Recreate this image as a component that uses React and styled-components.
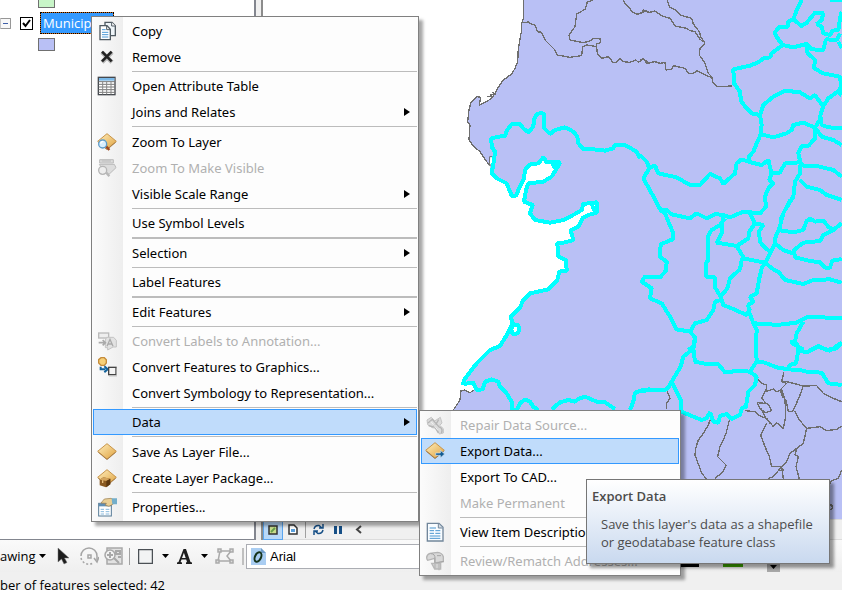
import React from "react";
import styled, { createGlobalStyle } from "styled-components";

const GlobalStyle = createGlobalStyle`
  * { box-sizing: border-box; }
  body {
    margin: 0;
    overflow: hidden;
    background: #f0f0f0;
    color: #000;
    font-family: "Open Sans", "Noto Sans", sans-serif;
    font-size: 13px;
  }
  button, select, input { font: inherit; color: inherit; margin: 0; }
`;

const Window = styled.div`
  position: relative;
  display: flex;
  flex-direction: column;
  height: 100vh;
`;

const Workspace = styled.div`
  display: flex;
  flex: 1;
  gap: 5px;
  min-height: 0;
`;

/* ---------- table of contents ---------- */

const Contents = styled.aside`
  flex: 0 0 256px;
  display: flex;
  flex-direction: column;
  gap: 4px;
  background: #fff;
  border-right: 2px solid #83868f;
  border-bottom: 1px solid #83868f;
`;

const Swatch = styled.span`
  flex: none;
  width: 17px;
  height: ${(p) => (p.$cut ? 8 : 13)}px;
  margin-left: 38px;
  background: ${(p) => p.$fill};
  border: 1px solid #707070;
  ${(p) => p.$cut && "border-top: 0;"}
`;

const LayerRow = styled.div`
  display: flex;
  align-items: center;
  height: 22px;
`;

const Expander = styled.button`
  width: 11px;
  height: 11px;
  margin-right: 9px;
  padding: 0 2px;
  border: 1px solid #979797;
  border-left-color: #c8c8c8;
  border-radius: 1px;
  background: #f8f8f8;
  display: flex;
  align-items: center;
`;

const Minus = styled.span`
  width: 100%;
  height: 1px;
  background: #3f5fa8;
`;

const CheckBox = styled.label`
  display: grid;
  width: 13px;
  height: 13px;
  margin-right: 7px;

  input {
    grid-area: 1 / 1;
    appearance: none;
    width: 13px;
    height: 13px;
    border: 1px solid #000;
    background: #fff;
  }
  svg { grid-area: 1 / 1; pointer-events: none; }
`;

const LayerName = styled.button`
  width: 74px;
  height: 22px;
  padding: 0 2px;
  overflow: hidden;
  text-align: left;
  line-height: 20px;
  color: #fff;
  background:
    linear-gradient(#3399ff, #3399ff) padding-box,
    linear-gradient(#c8681a, #c8681a) border-box;
  border: 1px dotted #000;
`;

/* ---------- map ---------- */

const MapPane = styled.main`
  flex: 1;
  display: flex;
  flex-direction: column;
  min-width: 0;
  border-left: 2px solid #8c8c8c;
`;

const MapCanvas = styled.div`
  flex: 1;
  min-height: 0;
  background: #fff;

  svg { display: block; width: 100%; height: 100%; }
`;

const ViewBar = styled.div`
  display: flex;
  align-items: center;
  height: 21px;
  border-top: 1px solid #dcdcdc;
  border-bottom: 1px solid #dcdcdc;
  background: #f0f0f0;
`;

const ViewButton = styled.button`
  display: grid;
  place-items: center;
  width: 20px;
  height: 20px;
  padding: 0;
  border: 1px solid ${(p) => (p.$active ? "#5ba5ee" : "transparent")};
  background: ${(p) => (p.$active ? "#b8d8f8" : "transparent")};
`;

const Divider = styled.span`
  flex: none;
  width: ${(p) => (p.$wide ? 2 : 1)}px;
  height: 17px;
  margin: 0 2px;
  background: ${(p) => (p.$wide ? "#c0c0c0" : "#a0a0a0")};
`;

/* ---------- bottom bars ---------- */

const Toolbar = styled.div`
  display: flex;
  align-items: center;
  height: 32px;
  background: linear-gradient(#fafafa, #efefef);
`;

const DrawingMenu = styled.button`
  display: flex;
  flex: none;
  align-items: center;
  gap: 3px;
  width: 48px;
  padding: 0;
  border: 0;
  background: none;
`;

const Tool = styled.button`
  flex: none;
  display: grid;
  place-items: center;
  width: ${(p) => p.$w || 27}px;
  height: 24px;
  padding: 0;
  border: 0;
  background: none;
`;

const FontBox = styled.label`
  display: flex;
  flex: 1 1 auto;
  align-items: center;
  gap: 4px;
  height: 25px;
  padding-left: 4px;
  background: #fff;
  border: 1px solid #abadb3;

  select {
    flex: 1;
    appearance: none;
    padding: 0;
    border: 0;
    background: none;
    font-family: "Liberation Sans", Arial, sans-serif;
    font-size: 13px;
  }
`;

const ColorTools = styled.div`
  flex: none;
  display: flex;
  align-items: flex-end;
  justify-content: flex-end;
  gap: 24px;
  width: 176px;
  height: 32px;
  padding-right: 62px;
`;

const ColorBar = styled.button`
  width: 20px;
  height: 3px;
  margin-bottom: 5px;
  padding: 0;
  border: 0;
  background: ${(p) => p.$color};
`;

const Overflow = styled.button`
  display: grid;
  place-items: center;
  width: 13px;
  height: 14px;
  padding: 4px 0 0;
  border: 0;
  background: #a8a8a8;
`;

const StatusBar = styled.footer`
  height: 18px;
  line-height: 26px;
  white-space: nowrap;
  background: #f0f0f0;
`;

/* ---------- menus ---------- */

const MenuPanel = styled.div`
  position: absolute;
  left: ${(p) => p.$left}px;
  top: ${(p) => p.$top}px;
  width: ${(p) => p.$width}px;
  padding: 1px;
  border: 1px solid #808080;
  background: linear-gradient(90deg, #fbfbfb 1px, #eeeeee 31px, #fdfdfd 31px);
  box-shadow: 4px 4px 3px rgba(0, 0, 0, 0.35);
  font-family: "Noto Sans", "Open Sans", sans-serif;
`;

const Item = styled.button`
  display: grid;
  grid-template-columns: 26px 1fr 12px;
  column-gap: 12px;
  align-items: center;
  width: 100%;
  height: 26px;
  padding: 0;
  border: 1px solid ${(p) => (p.$active ? "#3399ff" : "transparent")};
  background: ${(p) => (p.$active ? "#c0dcfb" : "none")};
  color: ${(p) => (p.disabled ? "#b0b0b0" : "#000")};
  text-align: left;
  line-height: 18px;
  white-space: nowrap;
`;

const IconCell = styled.span`
  display: grid;
  place-items: center;

  svg { width: 20px; height: 20px; }
`;

const Rule = styled.div`
  height: ${(p) => (p.$kind === "thin" ? 3 : 4)}px;
  margin-left: 39px;
  border: solid #fdfdfd;
  border-width: 1px 0 ${(p) => (p.$kind === "tall" ? 2 : 1)}px;
  background: #bcbcbc;
`;

const Tip = styled.div`
  position: absolute;
  left: 586px;
  top: 479px;
  width: 244px;
  padding: 7px 5px 12px;
  border: 1px solid #767676;
  background: linear-gradient(#ffffff, #c9d9ef);
  box-shadow: 4px 4px 3px rgba(0, 0, 0, 0.4);
  color: #4c4c4c;
  line-height: 18px;
`;

const TipTitle = styled.strong`
  display: block;
  font-weight: 600;
`;

const TipText = styled.p`
  margin: 10px 0 0;
  padding-left: 9px;
  white-space: nowrap;
`;

/* ---------- icons (60-unit grid, drawn at 20px) ---------- */

const Icon = ({ children }) => (
  <svg viewBox="0 0 60 60" aria-hidden="true">{children}</svg>
);

const Gold = ({ id }) => (
  <>
    <defs>
      <linearGradient id={id} x1="0" y1="0" x2="1" y2="1">
        <stop offset="0" stopColor="#fff0c0" />
        <stop offset="1" stopColor="#dfa03c" />
      </linearGradient>
    </defs>
    <path d="M30 5L58 28L30 51L2 28Z" fill={`url(#${id})`} stroke="#c8954a" strokeWidth="3" />
    <path d="M4 31L30 53L56 31" fill="none" stroke="#8d5a20" strokeWidth="2" />
  </>
);

const icons = {
  copy: (
    <Icon>
      <path d="M24 4H45L55 14V44H24Z" fill="#eef4f8" stroke="#4f5a62" strokeWidth="4" />
      <path d="M44 4V15H55" fill="#fff" stroke="#4f5a62" strokeWidth="3" />
      <path d="M9 14H30L40 25V56H9Z" fill="#fff" stroke="#4f5a62" strokeWidth="4" />
      <path d="M29 15V26H39" fill="none" stroke="#4f5a62" strokeWidth="3" />
      <path d="M15 26H26M15 34H34M15 41H34M15 48H34" stroke="#4e9ad6" strokeWidth="3" />
    </Icon>
  ),
  remove: (
    <Icon>
      <path d="M15 16L45 46M45 16L15 46" stroke="#b8b8b8" strokeWidth="13" />
      <path d="M15 14L44 43M44 14L15 43" stroke="#222" strokeWidth="8" />
    </Icon>
  ),
  table: (
    <Icon>
      <rect x="4" y="4" width="50" height="52" fill="#fff" stroke="#45494e" strokeWidth="4" />
      <rect x="6" y="6" width="46" height="8" fill="#79b8e8" />
      <path d="M5 17H54M5 25H54M5 33H54M5 41H54M5 49H54" stroke="#777" strokeWidth="3" />
      <path d="M17 16V55M29 16V55M42 16V55" stroke="#888" strokeWidth="3" />
    </Icon>
  ),
  zoom: (
    <Icon>
      <Gold id="gz" />
      <path d="M27 42L37 54" stroke="#a04820" strokeWidth="7" />
      <circle cx="17" cy="36" r="12" fill="#d8efff" stroke="#5e9bc8" strokeWidth="4" />
      <path d="M11 35Q12 28 19 28" fill="none" stroke="#fff" strokeWidth="4" />
    </Icon>
  ),
  zoomOff: (
    <Icon>
      <path d="M8 5H49V15H8ZM7 19H52L57 29L36 49L18 36Z" fill="#ddd" stroke="#bbb" strokeWidth="3" />
      <path d="M14 9H42" stroke="#aaa" strokeWidth="2" />
      <path d="M26 42L37 55" stroke="#b8b8b8" strokeWidth="7" />
      <circle cx="17" cy="37" r="12" fill="#eee" stroke="#b5b5b5" strokeWidth="4" />
    </Icon>
  ),
  annotation: (
    <Icon>
      <rect x="5" y="6" width="30" height="15" fill="#eee" stroke="#bbb" strokeWidth="4" />
      <path d="M29 19H50L58 28V48L48 48L32 57V50H25V27Z" fill="#e2e2e2" stroke="#c3c3c3" strokeWidth="3" />
      <path d="M5 35H24M17 27L25 35L17 43" fill="none" stroke="#aaa" strokeWidth="5" />
      <path d="M30 46L39 25L48 46M34 39H45" fill="none" stroke="#aaa" strokeWidth="4" />
    </Icon>
  ),
  graphics: (
    <Icon>
      <path d="M12 2H22L28 8V18L22 25H12L5 18V8Z" fill="#f7d078" stroke="#c58c3a" strokeWidth="4" />
      <path d="M11 29V37H25M22 28L32 37L22 46" fill="none" stroke="#13639c" strokeWidth="6" />
      <rect x="35" y="31" width="22" height="22" fill="#f4f4f4" stroke="#444" strokeWidth="4" />
      <path d="M36 57H60V34" fill="none" stroke="#c5c5c5" strokeWidth="3" />
    </Icon>
  ),
  layer: <Icon><Gold id="gl" /></Icon>,
  pack: (
    <Icon>
      <Gold id="gp" />
      <path d="M8 35L19 28L40 32V49L27 58L8 52Z" fill="#8a5a22" />
      <path d="M8 35L19 28L40 32L28 39Z" fill="#d4a45c" />
      <path d="M28 39L40 32V49L28 58Z" fill="#5d3810" />
      <path d="M17 37V45" stroke="#e8c080" strokeWidth="4" />
    </Icon>
  ),
  properties: (
    <Icon>
      <rect x="5" y="19" width="38" height="38" fill="#fff" stroke="#557a96" strokeWidth="3" />
      <rect x="6" y="21" width="36" height="7" fill="#5f8fb5" />
      <path d="M11 37H21M26 37H37M11 44H21M26 44H37M11 51H21M26 51H37" stroke="#88b9dd" strokeWidth="3" />
      <path d="M12 18L22 6L42 4L49 8V21L36 28L25 25L28 19Z" fill="#e9cf96" stroke="#96794a" strokeWidth="2" />
      <path d="M44 4H60V22H46Z" fill="#73aeca" />
    </Icon>
  ),
  repair: (
    <Icon>
      <path d="M6 15L19 7L29 18L46 7L51 24L44 31L55 41V54L43 57L36 40L22 38L8 29Z" fill="#dcdcdc" stroke="#c5c5c5" strokeWidth="3" />
      <path d="M9 24L22 13L44 38M25 28L40 54M41 14L32 29M44 36Q55 42 49 54M11 32L26 36" fill="none" stroke="#b4b4b4" strokeWidth="4" />
      <path d="M18 20L39 46" stroke="#f1f1f1" strokeWidth="3" />
    </Icon>
  ),
  exportData: (
    <Icon>
      <Gold id="ge" />
      <path d="M32 36H46V28L59 39L46 51V43H32Z" fill="#145c93" stroke="#d7e9f7" strokeWidth="2" />
    </Icon>
  ),
  description: (
    <Icon>
      <path d="M7 4H42L54 16V57H7Z" fill="#f8fcff" stroke="#71869b" strokeWidth="4" />
      <path d="M40 5V18H53" fill="#d5dce3" stroke="#71869b" strokeWidth="3" />
      <path d="M14 18H33M14 26H27M31 26H46M14 34H27M31 34H46M14 42H46M14 49H46" stroke="#4995cf" strokeWidth="3" />
    </Icon>
  ),
  review: (
    <Icon>
      <path d="M6 25Q2 12 15 7L38 4Q51 5 55 17V32L29 36V22L8 28Z" fill="#d8d8d8" stroke="#b4b4b4" strokeWidth="4" />
      <path d="M17 8Q31 8 30 23V37L56 31M36 14H48" fill="none" stroke="#a4a4a4" strokeWidth="3" />
      <path d="M20 37H47V54H29ZM30 38V55M42 37V58" fill="#d2d2d2" stroke="#b8b8b8" strokeWidth="4" />
    </Icon>
  ),
};

const Caret = () => (
  <svg width="7" height="4" aria-hidden="true"><path d="M0 0H7L3.5 4Z" fill="#000" /></svg>
);

const SubArrow = () => (
  <svg width="6" height="8" aria-hidden="true"><path d="M0 0L6 4L0 8Z" fill="#000" /></svg>
);

/* ---------- map drawing ---------- */

const coast =
  "M220 0V55L215 72L214 95L205 145L203 185L195 205L185 222L160 240L145 262L135 280L128 292L110 305L88 316L92 292L80 290L62 310L57 330L53 365L60 375L57 420L70 438L90 455L105 478L118 495";
const bay =
  "L125 520L140 535L170 550L185 587H198L212 555L222 535L225 510L238 494L265 490L280 472L290 487L330 487L322 502L305 530L280 545L235 550L228 570L222 605L248 615L240 640L255 660L300 668L340 660L375 642L395 630L400 612L440 607V638L415 645L400 652L385 680L362 692L370 720L345 727L322 730L325 770L348 780L350 812L328 815L322 840L295 868L240 880L220 900L210 922L182 950L188 970L172 1002L150 1038L120 1050L80 1090L42 1140L38 1155";

const sheets = [
  {
    at: "translate(450 0)",
    border: [
      "215 68 235 66 238 70 255 75 262 95 275 97 285 120 300 135 315 150 322 165 360 172 395 167 398 140 410 135 440 140 442 162 455 175 475 170 490 188 498 188 510 176 520 185 540 187 558 180 565 187 580 177 600 190",
      "430 0 412 6 405 28 380 42 375 80 357 105 360 120 400 128 420 123 430 115 450 115 452 128 440 132 440 145",
      "520 0 525 12 540 25 545 35 560 43 575 40 580 30 600 38",
      "112 290 130 290 120 285 138 283 125 277",
    ],
    cyan: [
      "132 480 135 455 125 440 124 415 145 410 165 408 170 393 185 372 210 372 220 385 235 397 250 380 252 358 260 343 275 338 283 345 283 385 300 402 315 390 345 382 370 395 382 410 385 430 400 447 430 448 465 452 490 445 495 435 525 435 560 455 570 475",
    ],
  },
  {
    at: "translate(450 200)",
    border: ["75 568 60 578 45 570 33 572 30 600 10 630"],
    cyan: [
      "40 552 70 548 80 570 98 568 105 545 125 538 145 545 150 560 170 580 185 605 187 630 200 630 210 610 225 598 240 605 250 620 265 630",
      "305 628 330 607 355 600 375 605 385 597 405 590 440 605 465 607 495 627",
      "540 630 550 605 555 578 580 570 600 568",
      "425 10 430 25 440 38",
    ],
  },
  {
    at: "translate(640 0)",
    border: [
      "0 40 20 32 25 38 45 33 65 47 90 55 105 78 140 85 150 92 165 95 180 118 195 128",
      "82 0 88 20 110 32 120 45 155 55 160 72 178 95 182 110 195 130 180 145 178 165 195 190 205 220 215 230 218 245 230 260 275 258",
      "0 182 10 175 20 190 45 185 60 190 75 187 78 210 95 208 100 197 135 205 145 220 160 220 172 212 195 225 215 232",
    ],
    cyan: [
      "485 0 470 30 460 58 445 65 445 80 420 80 403 98 415 118 428 135 395 160 390 172 370 175 355 187 330 197 280 208 282 250 300 275 303 303 320 325 335 340 360 345 365 375 362 403 350 430 340 455 327 470 325 485",
      "460 58 485 78 500 68 525 38 550 40 545 60 530 72 545 80 550 100 570 105 578 92 595 90 600 55 605 35",
      "428 135 460 142 500 132 515 148 550 150 558 118 590 120 600 100",
      "595 125 605 145",
      "500 135 502 158 525 180 522 205 550 220 600 230 603 255 598 280 605 285",
      "360 345 370 315 400 290 435 272 480 277 510 295 525 285 535 300 550 318 565 295 600 270",
      "550 318 540 350 545 375 565 382 605 385",
      "362 403 385 408 400 412 440 400 455 390 460 375 490 368 525 383 545 350",
      "525 383 525 415 505 438 485 438 475 460 482 490 480 520 465 545 460 590 435 630 420 660",
      "525 383 545 410 580 420 605 435",
      "325 485 365 495 385 480 395 520 420 518 435 490 480 487 490 497 530 498 580 510 605 530",
      "480 540 500 560 540 570 560 585 605 600",
      "0 465 20 485 28 505 10 535 35 580 60 628 80 630 95 643 150 655 170 640 200 655 225 642 250 645 270 652 310 635 360 640 378 620 375 590 385 565 400 550 388 540 395 520",
      "22 505 45 497 55 520 110 532 150 555 180 555 210 522 240 535 250 552 285 520 290 490 305 478 325 485",
      "570 0 605 0",
      "505 658 515 655",
    ],
  },
  {
    at: "translate(640 200)",
    border: [],
    cyan: [
      "60 30 75 40 85 65 100 100 98 118 62 133 60 170 80 185 78 212 60 232 15 230 5 245 35 265 30 295 65 310 90 350 110 388 150 395 165 412 160 440 145 450",
      "250 50 245 75 245 100 230 128 290 138 325 115 328 95 345 70 370 75 357 95 360 125 372 140 390 155",
      "255 55 240 75 215 90 203 110 205 180 197 190 198 230 225 232 225 262 242 290 262 265 270 235 300 208 305 180 310 172 300 155 290 138",
      "310 175 375 188",
      "330 40 345 70",
      "450 0 430 40 418 85 405 115 405 130 380 180 365 205 357 240 350 280 330 290 340 305 325 315 327 335 340 370 350 390 347 450",
      "415 90 460 97 490 90 500 62 515 58 525 65 550 62 565 80 580 90 605 70",
      "580 90 550 105 540 123 490 128 475 140 462 150 465 172 510 183 540 187 555 203 570 203 577 182 605 177",
      "405 130 430 150 465 162",
      "375 188 400 208 415 215 435 240 490 252 520 240 570 238 605 248",
      "242 290 250 315 275 325 320 345 330 325",
      "242 300 225 305 220 330 200 360 165 370 150 395",
      "340 370 380 372 410 375 470 368 500 352 605 353",
      "490 365 470 400 465 425 455 428 475 440 490 448",
      "510 450 535 438 560 450 590 445 605 430",
    ],
  },
  {
    at: "translate(640 340)",
    border: [
      "80 150 90 175 80 190 80 208",
      "210 240 205 255 190 280 175 300 167 325 165 345 178 380 185 400 200 417",
      "268 240 258 280 250 300 240 320 233 350 258 375 250 395 225 415",
      "315 212 345 215 360 228 380 235 400 260 410 248 430 265 437 230 435 180 425 150 410 155 400 147 375 155 365 175 378 190 385 193 395 212 375 218 360 205 352 188 375 190",
      "362 205 375 230 390 250",
      "355 118 365 130 380 135 378 152",
      "432 95 425 125 440 125 460 130 490 138 530 137 550 160 575 173 605 185",
      "425 125 440 130 420 150 430 175",
      "490 138 480 165 465 200 458 215 445 215 438 180",
      "465 213 478 240 500 265 540 260 560 272 590 268 605 258",
      "380 250 362 285 375 320 388 350 395 380 425 380 430 417",
      "500 265 490 310 470 325 450 340 440 365 425 380 400 410 385 415",
      "418 378 432 392 414 392 430 376",
      "470 325 465 345 475 350 468 380 478 417",
      "605 390 595 415 575 422 565 440",
      "568 495 575 495 578 505 568 510",
    ],
    cyan: [
      "165 0 160 25 165 65 205 73 235 73 255 97 300 92 330 95 350 65 375 68 410 82 445 88 480 90 500 95 545 98 565 130 605 135",
      "155 30 130 50 122 80 110 100 95 125 85 142 75 150 0 152",
      "95 125 115 165 122 180 125 215 155 228 185 240 200 235 210 217 220 245 235 248 240 228 260 222 275 237 300 225 305 205 318 200 325 155 345 135 350 110 330 95",
      "347 0 350 65",
      "450 5 470 10 475 30 468 70 450 75 440 92",
      "475 30 500 37 535 20 570 32 605 8",
    ],
  },
];

const Municipalities = () => (
  <svg viewBox="263 0 579 519" preserveAspectRatio="xMinYMin slice" shapeRendering="crispEdges" role="img" aria-label="Map of municipalities">
    <g fill="none" strokeLinejoin="bevel">
      <g transform="translate(450 0) scale(0.33333)">
        <path d={`${coast}${bay}L75 1157L75 1168L60 1178L45 1170L33 1172L30 1200L0 1250V1800H1600V0Z`} fill="#b9c0f5" />
        <path d="M119 470H130V490L118 497Z" fill="#fff" stroke="#6e6e6e" strokeWidth="3" />
        <path d={coast} stroke="#6e6e6e" strokeWidth="4" />
      </g>
      {sheets.map((s) => (
        <g key={s.at} transform={`${s.at} scale(0.33333)`}>
          {s.border.map((p) => <polyline key={p} points={p} stroke="#6e6e6e" strokeWidth="4" />)}
        </g>
      ))}
      {sheets.map((s) => (
        <g key={s.at} transform={`${s.at} scale(0.33333)`}>
          {s.cyan.map((p) => <polyline key={p} points={p} stroke="#00ffff" strokeWidth="12" />)}
        </g>
      ))}
      <g transform="translate(450 0) scale(0.33333)" stroke="#00ffff" strokeWidth="12">
        <path d={`M132 480${bay}`} />
        <path d="M186 975H205L208 990L203 1000L188 1003L184 990Z" fill="#fff" />
        <path d="M305 500L325 490" strokeWidth="16" />
      </g>
    </g>
  </svg>
);

/* ---------- data ---------- */

const layerMenu = [
  { label: "Copy", icon: "copy" },
  { label: "Remove", icon: "remove" },
  { rule: "thin" },
  { label: "Open Attribute Table", icon: "table" },
  { label: "Joins and Relates", sub: true },
  { rule: "tall" },
  { label: "Zoom To Layer", icon: "zoom" },
  { label: "Zoom To Make Visible", icon: "zoomOff", off: true },
  { label: "Visible Scale Range", sub: true },
  { rule: "thin" },
  { label: "Use Symbol Levels" },
  { rule: "heavy" },
  { label: "Selection", sub: true },
  { rule: "thin" },
  { label: "Label Features" },
  { rule: "heavy" },
  { label: "Edit Features", sub: true },
  { rule: "thin" },
  { label: "Convert Labels to Annotation...", icon: "annotation", off: true },
  { label: "Convert Features to Graphics...", icon: "graphics" },
  { label: "Convert Symbology to Representation..." },
  { rule: "thin" },
  { label: "Data", sub: true, active: true },
  { rule: "tall" },
  { label: "Save As Layer File...", icon: "layer" },
  { label: "Create Layer Package...", icon: "pack" },
  { rule: "thin" },
  { label: "Properties...", icon: "properties" },
];

const dataMenu = [
  { label: "Repair Data Source...", icon: "repair", off: true },
  { label: "Export Data...", icon: "exportData", active: true },
  { label: "Export To CAD..." },
  { label: "Make Permanent", off: true },
  { rule: "thin" },
  { label: "View Item Description...", icon: "description" },
  { rule: "thin" },
  { label: "Review/Rematch Addresses...", icon: "review", off: true },
];

const Menu = ({ items, label, left, top, width }) => (
  <MenuPanel role="menu" aria-label={label} $left={left} $top={top} $width={width}>
    {items.map((it, i) =>
      it.rule ? (
        <Rule key={i} role="separator" $kind={it.rule} />
      ) : (
        <Item key={i} type="button" role="menuitem" disabled={it.off} $active={it.active} aria-haspopup={it.sub ? "menu" : undefined}>
          <IconCell>{it.icon && icons[it.icon]}</IconCell>
          <span>{it.label}</span>
          {it.sub && <SubArrow />}
        </Item>
      )
    )}
  </MenuPanel>
);

export default function App() {
  return (
    <Window>
      <GlobalStyle />
      <Workspace>
        <Contents>
          <Swatch $fill="#c8f5c8" $cut />
          <LayerRow>
            <Expander type="button" aria-label="Collapse layer"><Minus /></Expander>
            <CheckBox>
              <input type="checkbox" defaultChecked aria-label="Show Municipios" />
              <svg viewBox="0 0 13 13"><path d="M3 6L5.500 9L10 3" fill="none" stroke="#000" strokeWidth="2" /></svg>
            </CheckBox>
            <LayerName type="button">Municipios</LayerName>
          </LayerRow>
          <Swatch $fill="#b9c0f5" />
        </Contents>

        <MapPane>
          <MapCanvas><Municipalities /></MapCanvas>
          <ViewBar>
            <ViewButton type="button" aria-label="Data view" $active>
              <svg width="10" height="10"><rect x="1" y="1" width="8" height="8" fill="#c9dc8c" stroke="#333" strokeWidth="1.500" /><path d="M3 7L7 3" stroke="#68a04a" strokeWidth="2" /></svg>
            </ViewButton>
            <ViewButton type="button" aria-label="Layout view">
              <svg width="10" height="11"><path d="M1 1H6L9 4V10H1Z" fill="#fff" stroke="#333" strokeWidth="1.500" /><path d="M3 5H7V8H3Z" fill="#5aa0dc" /></svg>
            </ViewButton>
            <Divider />
            <ViewButton type="button" aria-label="Refresh">
              <svg width="11" height="11" fill="none" stroke="#164f86" strokeWidth="1.500"><path d="M1 5Q2 1 6 1.500L9 4M10 0V4H6M10 6Q9 10 5 9.500L2 7M1 11V7H5" /></svg>
            </ViewButton>
            <ViewButton type="button" aria-label="Pause drawing">
              <svg width="8" height="8" fill="#164f86"><path d="M0 0H3V8H0ZM5 0H8V8H5Z" /></svg>
            </ViewButton>
            <ViewButton type="button" aria-label="Scroll left">
              <svg width="7" height="9" fill="none" stroke="#444" strokeWidth="2"><path d="M6 1L2 4.500L6 8" /></svg>
            </ViewButton>
          </ViewBar>
        </MapPane>
      </Workspace>

      <Toolbar role="toolbar" aria-label="Draw">
        <DrawingMenu type="button" aria-label="Drawing">awing<Caret /></DrawingMenu>
        <Tool type="button" aria-label="Select elements" $w={30}>
          <svg width="14" height="18"><path d="M2 1V15L5.500 12L8 17L11 15.500L8.500 11H13Z" fill="#1d1d1d" stroke="#777" strokeWidth=".5" /></svg>
        </Tool>
        <Tool type="button" aria-label="Rotate" $w={22}>
          <svg width="19" height="18" fill="none" stroke="#a5a5a5" strokeWidth="1.500"><path d="M1 9A8 8 0 0 1 17 9V13" /><path d="M1 11A8 8 0 0 0 13 16" strokeDasharray="2 2" /><path d="M14 11L17 15L19 10" /><rect x="8" y="8" width="3" height="3" /></svg>
        </Tool>
        <Tool type="button" aria-label="Zoom to selected">
          <svg width="19" height="18" fill="none" stroke="#a8a8a8"><rect x="3" y="1" width="15" height="16" fill="#e2e2e2" strokeWidth="1.500" /><circle cx="6" cy="8" r="5" fill="#f2f2f2" strokeWidth="1.500" /><path d="M3 8H9M6 5V11" strokeWidth="2" /><path d="M10 11L15 16M12 4H16V7H12ZM14 10H17" strokeWidth="2" /></svg>
        </Tool>
        <Divider />
        <Tool type="button" aria-label="Rectangle">
          <svg width="15" height="15"><rect x=".5" y=".5" width="14" height="14" fill="#f2f3f4" stroke="#4b5055" strokeWidth="1.500" /></svg>
        </Tool>
        <Tool type="button" aria-label="Shape options" $w={12}><Caret /></Tool>
        <Tool type="button" aria-label="Text">
          <svg width="15" height="15" fill="#1e1e1e"><path d="M0 15V13.500L1.500 13L6.500 0H9L13.500 13L15 13.500V15H9V13.500L10 13L9.200 10.500H4.500L3.600 13L5 13.500V15ZM5 9H8.700L6.900 3.800Z" /></svg>
        </Tool>
        <Tool type="button" aria-label="Text options" $w={12}><Caret /></Tool>
        <Tool type="button" aria-label="Edit vertices" $w={30}>
          <svg width="20" height="16" fill="none" stroke="#aaa" strokeWidth="1.500"><path d="M5 3H16L12 8L16 13H3L5 3" /><path d="M3 1H6V4H3ZM15 1H18V4H15ZM1 12H4V15H1ZM15 12H18V15H15Z" fill="#ddd" /></svg>
        </Tool>
        <Divider $wide />
        <FontBox>
          <svg width="15" height="17" aria-hidden="true"><path d="M0 0H10L15 5V17H0Z" fill="#a9cdf2" /><path d="M10 0V5H15Z" fill="#6f9cc8" /><ellipse cx="7" cy="9" rx="3" ry="5" fill="none" stroke="#15331c" strokeWidth="2" transform="rotate(25 7 9)" /></svg>
          <select aria-label="Font" defaultValue="Arial"><option>Arial</option></select>
        </FontBox>
        <ColorTools>
          <ColorBar type="button" aria-label="Font color" $color="#000" />
          <ColorBar type="button" aria-label="Fill color" $color="#3da600" />
          <Overflow type="button" aria-label="More tools"><Caret /></Overflow>
        </ColorTools>
      </Toolbar>
      <StatusBar>ber of features selected: 42</StatusBar>

      <Menu items={layerMenu} label="Layer" left={91} top={16} width={328} />
      <Menu items={dataMenu} label="Data" left={419} top={410} width={262} />
      <Tip role="tooltip">
        <TipTitle>Export Data</TipTitle>
        <TipText>Save this layer's data as a shapefile<br />or geodatabase feature class</TipText>
      </Tip>
    </Window>
  );
}
